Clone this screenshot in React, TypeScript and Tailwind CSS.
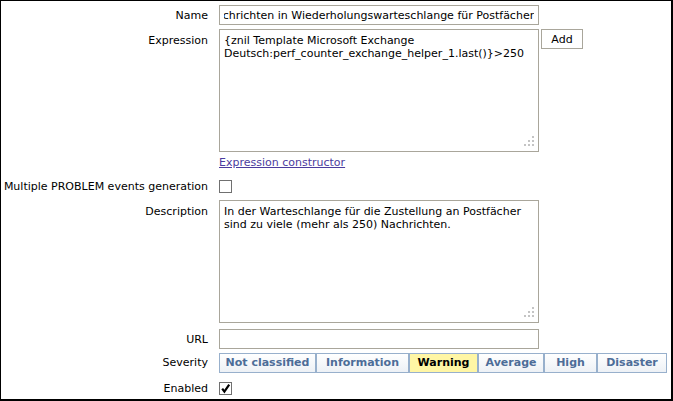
import React, { useEffect, useRef } from 'react';

const field = 'border border-[#a9a69b] bg-white';

function Grip() {
  // resize handle dots in the textarea corner
  const dots = [
    [8, 0],
    [4, 4],
    [8, 4],
    [0, 8],
    [4, 8],
    [8, 8],
  ];
  return (
    <svg className="absolute bottom-[5px] right-[4px]" width="10" height="10" viewBox="0 0 10 10">
      {dots.map(([x, y]) => (
        <rect key={`${x}-${y}`} x={x} y={y} width="2" height="2" fill="#c4c4c4" />
      ))}
    </svg>
  );
}

function Label({ children, className = '' }: { children?: React.ReactNode; className?: string }) {
  return <div className={`w-[207px] shrink-0 text-right ${className}`}>{children}</div>;
}

const severities = [
  { name: 'Not classified', w: 'w-[97px]' },
  { name: 'Information', w: 'w-[93px]' },
  { name: 'Warning', w: 'w-[69px]', active: true },
  { name: 'Average', w: 'w-[66px]' },
  { name: 'High', w: 'w-[53px]' },
  { name: 'Disaster', w: 'w-[70px]' },
];

export default function App() {
  const nameRef = useRef<HTMLInputElement>(null);

  // the name field is shown scrolled to its end, as after typing
  useEffect(() => {
    const el = nameRef.current;
    if (el) el.scrollLeft = el.scrollWidth;
  }, []);

  return (
    <div className="h-[401px] w-[673px] overflow-hidden border-t border-l border-r-2 border-b-2 border-black bg-white font-['DejaVu_Sans',Verdana,sans-serif] text-[11px] text-black">
      {/* Name */}
      <div className="mt-[4px] flex">
        <Label className="h-[20px] pt-[2px] leading-[18px]">Name</Label>
        <input
          ref={nameRef}
          readOnly
          value="Zu viele Nachrichten in Wiederholungswarteschlange für Postfächer"
          className={`ml-[11px] h-[20px] w-[320px] px-[4px] pt-[1px] text-[11px] leading-[18px] text-black outline-none ${field}`}
        />
      </div>

      {/* Expression */}
      <div className="mt-[4px] flex">
        <Label className="pt-[5px] leading-[13px]">Expression</Label>
        <div className={`relative ml-[11px] h-[123px] w-[320px] px-[4px] pt-[4px] leading-[13px] ${field}`}>
          {'{znil Template Microsoft Exchange'}
          <br />
          {'Deutsch:perf_counter_exchange_helper_1.last()}>250'}
          <Grip />
        </div>
        <button className={`ml-[2px] h-[20px] w-[42px] pt-[1px] text-center leading-[17px] ${field}`}>Add</button>
      </div>

      {/* Expression constructor */}
      <div className="mt-[4px] flex">
        <Label />
        <a className="ml-[11px] leading-[13px] text-[#4b3c9e] underline">Expression constructor</a>
      </div>

      {/* Multiple PROBLEM events */}
      <div className="mt-[11px] flex items-center">
        <Label className="leading-[13px]">Multiple PROBLEM events generation</Label>
        <div className="ml-[11px] h-[13px] w-[13px] border border-[#707070] bg-white" />
      </div>

      {/* Description */}
      <div className="mt-[7px] flex">
        <Label className="pt-[5px] leading-[13px]">Description</Label>
        <div className={`relative ml-[11px] h-[123px] w-[320px] px-[4px] pt-[4px] leading-[13px] ${field}`}>
          In der Warteschlange für die Zustellung an Postfächer
          <br />
          sind zu viele (mehr als 250) Nachrichten.
          <Grip />
        </div>
      </div>

      {/* URL */}
      <div className="mt-[6px] flex">
        <Label className="h-[20px] pt-[2px] leading-[18px]">URL</Label>
        <div className={`ml-[11px] h-[20px] w-[320px] ${field}`} />
      </div>

      {/* Severity */}
      <div className="mt-[4px] flex">
        <Label className="leading-[20px]">Severity</Label>
        <div className="ml-[11px] flex">
          {severities.map((s) => (
            <div
              key={s.name}
              className={`h-[20px] ${s.w} border border-[#98b0cc] text-center font-bold leading-[18px] ${
                s.active
                  ? 'bg-[#fff6a5] text-black'
                  : 'bg-gradient-to-b from-white to-[#edf1f6] text-[#4d6d98]'
              }`}
            >
              {s.name}
            </div>
          ))}
        </div>
      </div>

      {/* Enabled */}
      <div className="mt-[9px] flex items-center">
        <Label className="leading-[13px]">Enabled</Label>
        <div className="ml-[11px] h-[13px] w-[13px] border border-[#707070] bg-white">
          <svg width="11" height="11" viewBox="0 0 11 11">
            <path d="M2.2 5.6 L4.4 8.6 L9.2 1.6" fill="none" stroke="#000" strokeWidth="2.2" />
          </svg>
        </div>
      </div>
    </div>
  );
}
